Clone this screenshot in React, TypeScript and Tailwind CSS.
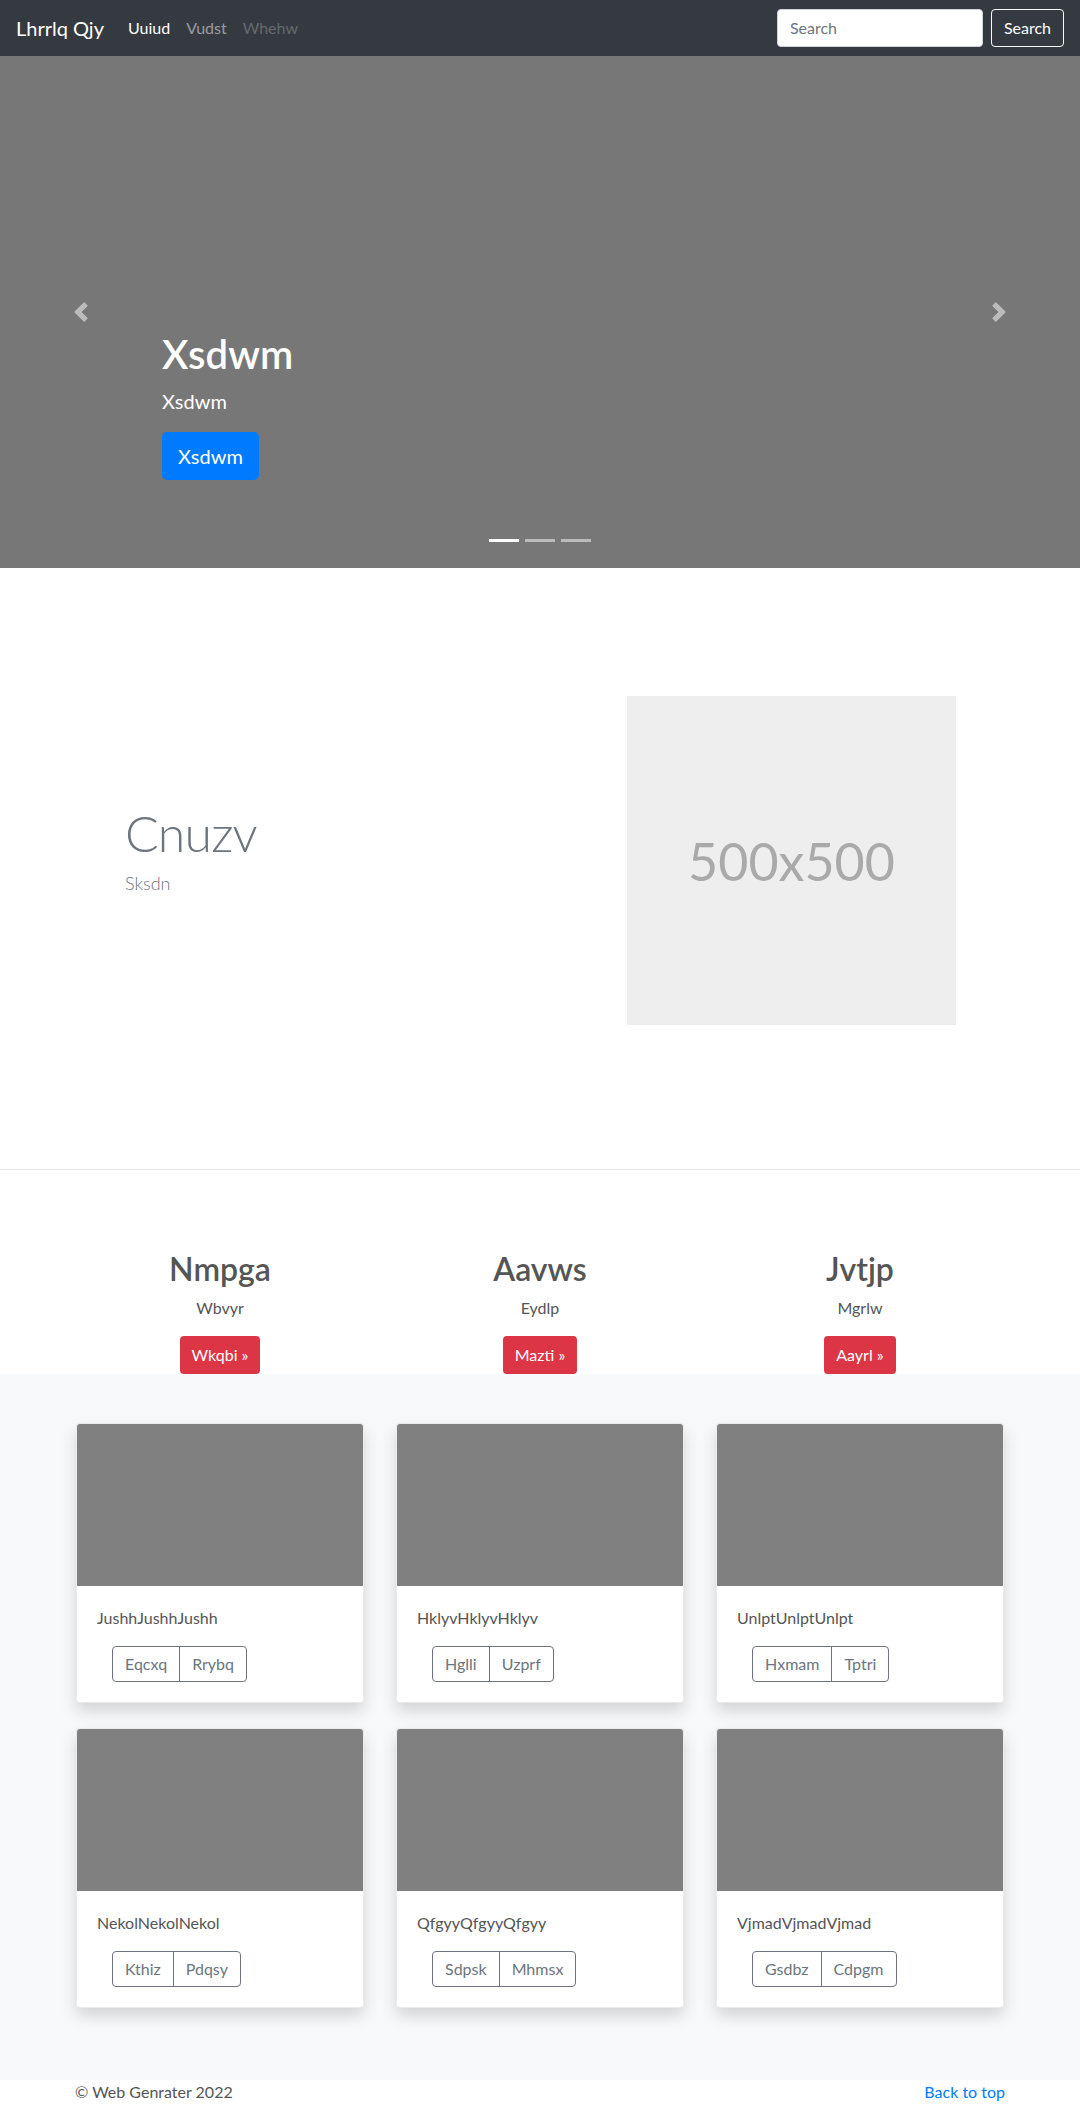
import React from "react";

type Card = {
  title: string;
  actions: [string, string];
};

const cards: Card[] = [
  { title: "JushhJushhJushh", actions: ["Eqcxq", "Rrybq"] },
  { title: "HklyvHklyvHklyv", actions: ["Hglli", "Uzprf"] },
  { title: "UnlptUnlptUnlpt", actions: ["Hxmam", "Tptri"] },
  { title: "NekolNekolNekol", actions: ["Kthiz", "Pdqsy"] },
  { title: "QfgyyQfgyyQfgyy", actions: ["Sdpsk", "Mhmsx"] },
  { title: "VjmadVjmadVjmad", actions: ["Gsdbz", "Cdpgm"] },
];

const columns = [
  { heading: "Nmpga", text: "Wbvyr", button: "Wkqbi" },
  { heading: "Aavws", text: "Eydlp", button: "Mazti" },
  { heading: "Jvtjp", text: "Mgrlw", button: "Aayrl" },
];

function Chevron({ flip }: { flip?: boolean }) {
  return (
    <svg
      width="20"
      height="20"
      viewBox="0 0 8 8"
      fill="#fff"
      className={flip ? "rotate-180 opacity-50" : "opacity-50"}
    >
      <path d="M5.25 0l-4 4 4 4 1.5-1.5L4.25 4l2.5-2.5L5.25 0z" />
    </svg>
  );
}

export default function App() {
  return (
    <div className="min-h-screen bg-white font-['Lato','Open_Sans',sans-serif] text-base text-[#212529]">
      {/* navbar */}
      <nav className="flex h-14 items-center bg-[#343a40] px-4">
        <span className="mr-4 text-xl leading-[30px] text-white">Lhrrlq Qjy</span>
        <div className="flex items-center">
          <span className="px-2 text-white">Uuiud</span>
          <span className="px-2 text-white/50">Vudst</span>
          <span className="px-2 text-white/25">Whehw</span>
        </div>
        <div className="ml-auto flex items-center">
          <div className="flex h-[38px] w-[206px] items-center rounded border border-[#ced4da] bg-white px-3 text-[#6c757d]">
            Search
          </div>
          <button className="ml-2 h-[38px] rounded border border-[#f8f9fa] px-3 text-white">
            Search
          </button>
        </div>
      </nav>

      {/* carousel */}
      <div className="relative h-[512px] bg-[#777]">
        <div className="absolute inset-y-0 left-0 flex w-[15%] items-center justify-center">
          <Chevron />
        </div>
        <div className="absolute inset-y-0 right-0 flex w-[15%] items-center justify-center">
          <Chevron flip />
        </div>
        <div className="absolute left-[15%] top-[274px] text-white">
          <h1 className="mb-2 text-[40px] font-semibold leading-[1.2]">Xsdwm</h1>
          <p className="mb-4 text-xl leading-[30px]">Xsdwm</p>
          <button className="h-12 rounded-[5px] bg-[#007bff] px-4 text-xl text-white">
            Xsdwm
          </button>
        </div>
        <div className="absolute bottom-[26px] left-0 right-0 flex justify-center gap-[6px]">
          <span className="h-[3px] w-[30px] bg-white" />
          <span className="h-[3px] w-[30px] bg-white/50" />
          <span className="h-[3px] w-[30px] bg-white/50" />
        </div>
      </div>

      {/* featurette */}
      <section className="border-b border-[#e5e5e5] pb-[144px] pt-[128px]">
        <div className="mx-auto flex w-[960px] items-center">
          <div className="w-[567px] pl-[65px]">
            <h2 className="mb-[11px] text-[50px] font-light leading-none tracking-[-0.8px] text-[#6c757d]">
              Cnuzv
            </h2>
            <p className="mb-4 text-lg font-light text-[#6c757d]">Sksdn</p>
          </div>
          <div className="flex h-[329px] w-[329px] items-center justify-center bg-[#eee] text-[52px] text-[#aaa]">
            500x500
          </div>
        </div>
      </section>

      {/* three columns */}
      <section className="pt-20">
        <div className="mx-auto grid w-[960px] grid-cols-3 text-center">
          {columns.map((c) => (
            <div key={c.heading} className="flex flex-col items-center">
              <h2 className="mb-2 text-[32px] font-semibold leading-[1.2] text-[#555]">
                {c.heading}
              </h2>
              <p className="mb-4 leading-6 text-[#555]">{c.text}</p>
              <button className="h-[38px] rounded bg-[#dc3545] px-3 text-white">
                {c.button} »
              </button>
            </div>
          ))}
        </div>
      </section>

      {/* album */}
      <section className="bg-[#f8f9fa] pb-[72px] pt-[49px]">
        <div className="mx-auto grid w-[928px] grid-cols-3 gap-x-8 gap-y-[25px]">
          {cards.map((card) => (
            <div
              key={card.title}
              className="overflow-hidden rounded border border-black/[0.08] bg-white shadow-[0_8px_16px_rgba(0,0,0,0.15)]"
            >
              <div className="h-[162px] bg-[#808080]" />
              <div className="p-5">
                <p className="mb-4 leading-6 text-[#555]">{card.title}</p>
                <div className="ml-[15px] inline-flex h-9 rounded border border-[#6c757d] text-[#6c757d]">
                  <span className="flex items-center px-3">{card.actions[0]}</span>
                  <span className="flex items-center border-l border-[#6c757d] px-3">
                    {card.actions[1]}
                  </span>
                </div>
              </div>
            </div>
          ))}
        </div>
      </section>

      {/* footer */}
      <footer className="pb-12">
        <div className="mx-auto flex w-[930px] justify-between leading-6">
          <span className="text-[#555]">© Web Genrater 2022</span>
          <span className="text-[#007bff]">Back to top</span>
        </div>
      </footer>
    </div>
  );
}
